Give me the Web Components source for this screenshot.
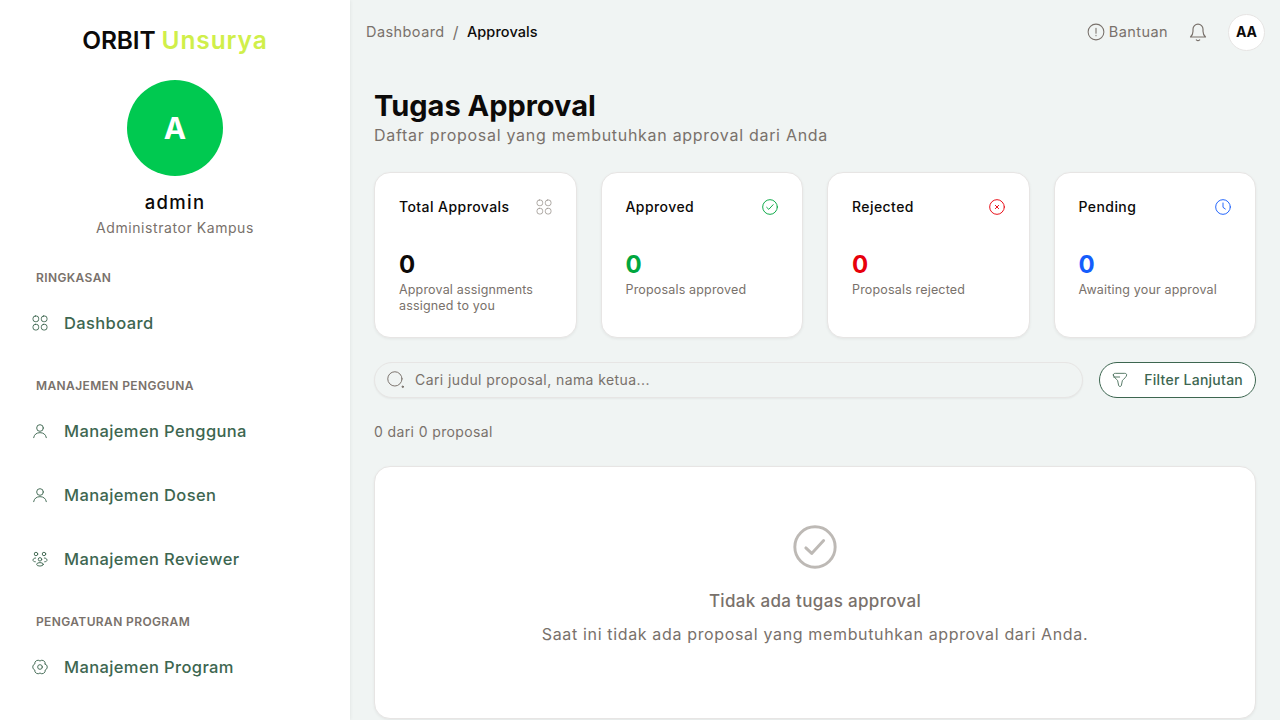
<!doctype html>
<html lang="id"><head><meta charset="utf-8"><title>Tugas Approval</title>
<style>
html,body{margin:0;height:720px;overflow:hidden;background:#f0f4f3;font-family:Inter,"Noto Sans",sans-serif;color:#0c0a09}
</style></head><body>
<orbit-app>
  <orbit-sidebar slot="sidebar">
    <nav-section label="RINGKASAN"><nav-item icon="grid">Dashboard</nav-item></nav-section>
    <nav-section label="MANAJEMEN PENGGUNA">
      <nav-item icon="user">Manajemen Pengguna</nav-item>
      <nav-item icon="user">Manajemen Dosen</nav-item>
      <nav-item icon="people">Manajemen Reviewer</nav-item>
    </nav-section>
    <nav-section label="PENGATURAN PROGRAM"><nav-item icon="gear">Manajemen Program</nav-item></nav-section>
  </orbit-sidebar>
  <orbit-main>
    <top-bar></top-bar>
    <page-content>
      <page-heading title="Tugas Approval" sub="Daftar proposal yang membutuhkan approval dari Anda"></page-heading>
      <stat-grid>
        <stat-card label="Total Approvals" value="0" icon="grid" tone="#a6a09b" num="#0c0a09">Approval assignments assigned to you</stat-card>
        <stat-card label="Approved" value="0" icon="check" tone="#00a63e" num="#00a63e">Proposals approved</stat-card>
        <stat-card label="Rejected" value="0" icon="cross" tone="#e7000b" num="#e7000b">Proposals rejected</stat-card>
        <stat-card label="Pending" value="0" icon="clock" tone="#155dfc" num="#155dfc">Awaiting your approval</stat-card>
      </stat-grid>
      <filter-bar></filter-bar>
      <result-count>0 dari 0 proposal</result-count>
      <empty-state title="Tidak ada tugas approval">Saat ini tidak ada proposal yang membutuhkan approval dari Anda.</empty-state>
    </page-content>
  </orbit-main>
</orbit-app>
<script>
const ICONS={
 grid:'<rect x="1.5" y="1.5" width="8.5" height="8.5" rx="3.5"/><rect x="14" y="1.5" width="8.5" height="8.5" rx="3.5"/><rect x="1.5" y="14" width="8.5" height="8.5" rx="3.5"/><rect x="14" y="14" width="8.5" height="8.5" rx="3.5"/>',
 user:'<circle cx="12" cy="7.5" r="5"/><path d="M2.5 22c.8-5 4.5-7.5 9.5-7.5s8.700 2.500 9.500 7.500"/>',
 people:'<circle cx="6" cy="4.5" r="2.6"/><circle cx="18" cy="4.5" r="2.6"/><circle cx="12" cy="12.5" r="2.6"/><path d="M1.5 13c.5-1.700 2-2.500 4-2.500M22.500 13c-.5-1.700-2-2.500-4-2.500M1.500 14.500c.6 1.100 2 1.700 3.500 1.700M22.500 14.500c-.6 1.100-2 1.700-3.500 1.700"/><ellipse cx="12" cy="20" rx="5" ry="2.6"/>',
 gear:'<circle cx="12" cy="12" r="3.5"/><path d="M19.79 7.5A4.800 4.800 0 0 1 19.79 16.5A4.800 4.800 0 0 1 12 21A4.800 4.800 0 0 1 4.21 16.5A4.800 4.800 0 0 1 4.21 7.5A4.800 4.800 0 0 1 12 3A4.800 4.800 0 0 1 19.79 7.5z"/>',
 check:'<circle cx="12" cy="12" r="11"/><path d="M7 12.5l3.200 3 6.500-7"/>',
 cross:'<circle cx="12" cy="12" r="11"/><path d="M9.5 9.5l5 5M14.5 9.500l-5 5"/>',
 clock:'<circle cx="12" cy="12" r="11"/><path d="M12 6v6.500l3.500 2.500"/>',
 info:'<circle cx="12" cy="12" r="10.5"/><path d="M12 7v6.500M12 16.500v.5"/>',
 bell:'<path d="M3 18c1.500-1.500 3-3.500 3-7V8.500a6 6 0 0 1 12 0V11c0 3.500 1.500 5.500 3 7z"/><path d="M10 21.5c1 .9 3 .9 4 0"/>',
 search:'<circle cx="10.5" cy="10.5" r="9.5"/><circle cx="21" cy="21" r="1" fill="#79716b"/>',
 filter:'<path d="M2 4.500C2 3 3 2 5 2h14c2 0 3 1 3 2.500 0 2.500-4.500 6-6.500 8.500-.8 2-.5 4.500-1.500 7.500-.5 1.500-3.500 1.500-4 0-1-3-.7-5.500-1.500-7.500C6.500 10.500 2 7 2 4.500z"/><path d="M2.500 7.500h9"/>'
};
function svg(name,size,color,sw){return `<svg xmlns="http://www.w3.org/2000/svg" width="${size}" height="${size}" viewBox="0 0 24 24" fill="none" stroke="${color}" stroke-width="${sw}" stroke-linecap="round" stroke-linejoin="round" style="display:block;flex:none">${ICONS[name]}</svg>`}
function def(tag,render){customElements.define(tag,class extends HTMLElement{constructor(){super();this.attachShadow({mode:'open'})}connectedCallback(){this.shadowRoot.innerHTML=render(this)}})}
const a=(e,n)=>e.getAttribute(n)||'';

def('orbit-app',()=>`<style>:host{display:flex;height:720px}</style><slot name="sidebar"></slot><slot></slot>`);

def('orbit-sidebar',()=>`<style>
:host{display:block;width:350px;flex:none;height:720px;overflow:hidden;background:#fff;box-shadow:0 0 4px rgba(0,0,0,.08);position:relative;z-index:1}
.logo{font-size:24.5px;font-weight:600;text-align:center;line-height:32px;padding-top:24px;letter-spacing:-.15px}
.logo span{color:#d0ef4a;letter-spacing:.9px}
.av{width:96px;height:96px;border-radius:50%;background:#00c950;color:#fff;font-weight:700;font-size:30px;display:flex;align-items:center;justify-content:center;margin:24px auto 0}
.name{font-size:18.5px;font-weight:500;text-align:center;line-height:28px;margin-top:12px;letter-spacing:1.3px}
.role{font-size:14px;color:#79716b;text-align:center;line-height:24px;letter-spacing:.57px}
nav{padding:28px 0 0}
</style><div class="logo">ORBIT <span>Unsurya</span></div><div class="av">A</div><div class="name">admin</div><div class="role">Administrator Kampus</div><nav><slot></slot></nav>`);

def('nav-section',e=>`<style>
:host{display:block;margin-bottom:21px}
h3{margin:0;font-size:12px;font-weight:600;color:#79716b;letter-spacing:.38px;line-height:20px;padding-left:36px}
::slotted(nav-item:first-of-type){margin-top:3px}
</style><h3>${a(e,'label')}</h3><slot></slot>`);

def('nav-item',e=>`<style>
:host{display:flex;align-items:center;height:64px;padding-left:32px;gap:16px;color:#3d6650;font-size:16.5px;font-weight:500;letter-spacing:.38px}
</style>${svg(a(e,'icon'),16,'#3d6650',1.4)}<span><slot></slot></span>`);

def('orbit-main',()=>`<style>:host{display:flex;flex-direction:column;flex:1;min-width:0;height:720px;overflow:hidden}</style><slot></slot>`);

def('top-bar',()=>`<style>
:host{display:flex;align-items:center;justify-content:space-between;height:64px;flex:none;padding:0 15px 0 16px;font-size:14.5px;line-height:20px;color:#79716b;letter-spacing:.43px}
.crumb{display:flex;gap:8px;margin-top:-1px}
.crumb i{font-style:normal;font-size:16px;line-height:20px}
.crumb b{font-weight:500;color:#0c0a09;letter-spacing:.1px}
.r{display:flex;align-items:center}
.help{display:flex;align-items:center;gap:4px}
.bell{margin:0 20px}
.aa{width:37px;height:37px;border-radius:50%;background:#fff;border:1px solid #e7e5e4;box-sizing:border-box;color:#0c0a09;font-weight:700;font-size:14px;display:flex;align-items:center;justify-content:center;letter-spacing:0}
</style><div class="crumb"><span>Dashboard</span><i>/</i><b>Approvals</b></div>
<div class="r"><div class="help">${svg('info',18,'#79716b',1.4)}<span>Bantuan</span></div><div class="bell">${svg('bell',20,'#79716b',1.4)}</div><div class="aa">AA</div></div>`);

def('page-content',()=>`<style>:host{display:flex;flex-direction:column;padding:24px 24px 0;flex:1;min-height:0}</style><slot></slot>`);

def('page-heading',e=>`<style>
:host{display:block}
h1{margin:0;font-size:29px;font-weight:700;line-height:36px;color:#0c0a09}
p{margin:-1px 0 0;font-size:16px;line-height:24px;color:#79716b;letter-spacing:.71px}
</style><h1>${a(e,'title')}</h1><p>${a(e,'sub')}</p>`);

def('stat-grid',()=>`<style>:host{display:grid;grid-template-columns:repeat(4,1fr);gap:24px;margin-top:25px}</style><slot></slot>`);

def('stat-card',e=>`<style>
:host{display:block;box-sizing:border-box;height:166px;background:#fff;border:1px solid #e7e5e4;border-radius:16px;padding:24px;box-shadow:0 1px 3px rgba(0,0,0,.06)}
.h{display:flex;justify-content:space-between;align-items:center;height:20px}
.l{font-size:14px;line-height:20px;margin-top:-1px;font-weight:500;color:#0c0a09;letter-spacing:.43px}
.v{font-size:24px;font-weight:700;line-height:32px;margin-top:32px;color:${a(e,'num')}}
.s{font-size:12.5px;line-height:16px;color:#79716b;margin-top:1px;letter-spacing:.17px}
</style><div class="h"><span class="l">${a(e,'label')}</span>${svg(a(e,'icon'),16,a(e,'tone'),1.4)}</div><div class="v">${a(e,'value')}</div><div class="s"><slot></slot></div>`);

def('filter-bar',()=>`<style>
:host{display:flex;gap:16px;margin-top:24px;height:36px}
.s{flex:1;display:flex;align-items:center;gap:10px;box-sizing:border-box;border:1px solid #e7e5e4;border-radius:18px;padding:0 12px;background:#f0f4f3;box-shadow:0 1px 2px rgba(0,0,0,.05);font-size:14px;line-height:20px;color:#79716b;letter-spacing:.41px}
.b{display:flex;align-items:center;justify-content:space-between;box-sizing:border-box;width:157px;border:1px solid #3d6650;border-radius:18px;padding:0 12px;background:#fff;color:#3d6650;font-size:14px;line-height:20px;font-weight:500;letter-spacing:.25px}
span{margin-top:-1px}
</style><div class="s">${svg('search',18,'#79716b',1.3)}<span>Cari judul proposal, nama ketua...</span></div><div class="b">${svg('filter',16,'#3d6650',1.3)}<span>Filter Lanjutan</span></div>`);

def('result-count',()=>`<style>:host{display:block;font-size:14px;line-height:20px;color:#79716b;margin-top:24px;letter-spacing:.38px}</style><slot></slot>`);

def('empty-state',e=>`<style>
:host{display:flex;flex-direction:column;align-items:center;box-sizing:border-box;height:253px;flex:none;margin-top:24px;background:#fff;border:1px solid #e7e5e4;border-radius:16px;padding-top:58px;box-shadow:0 1px 3px rgba(0,0,0,.06)}
h2{margin:18px 0 0;font-size:17px;font-weight:500;line-height:28px;color:#79716b;letter-spacing:.33px}
p{margin:7px 0 0;font-size:16px;line-height:24px;color:#79716b;letter-spacing:.65px}
</style>${svg('check',44,'#bdb9b5',1.6)}<h2>${a(e,'title')}</h2><p><slot></slot></p>`);
</script>
</body></html>
